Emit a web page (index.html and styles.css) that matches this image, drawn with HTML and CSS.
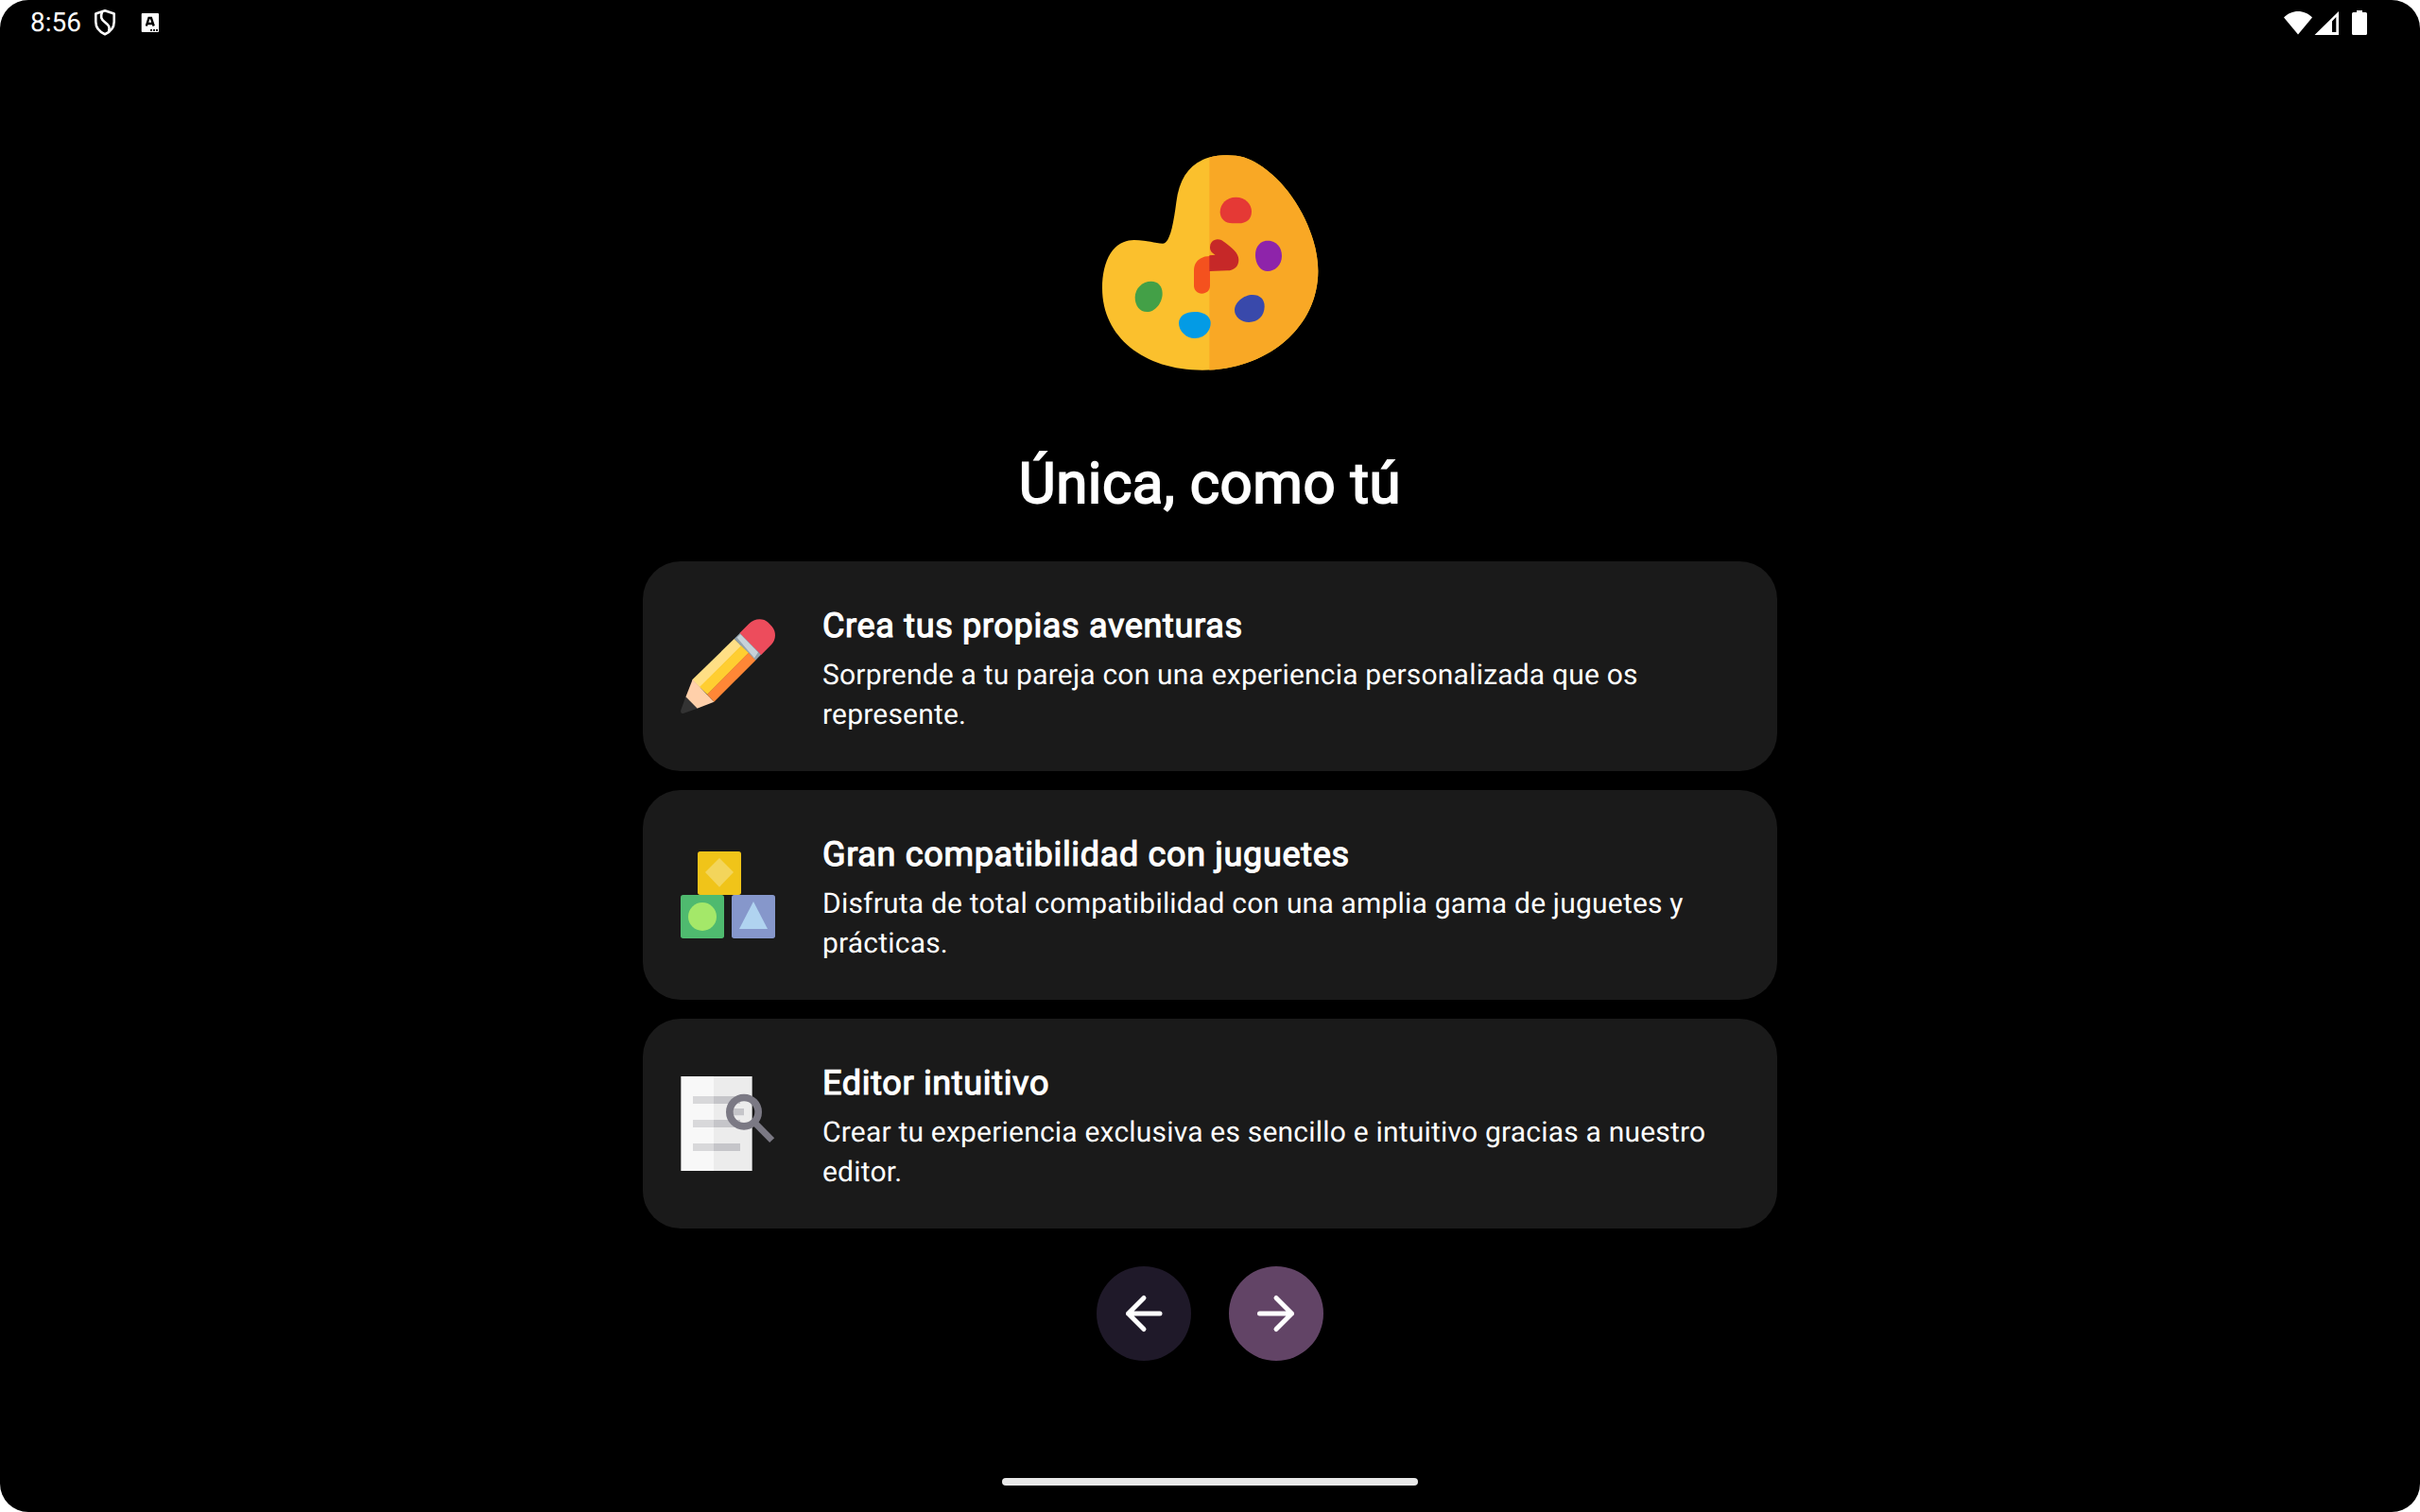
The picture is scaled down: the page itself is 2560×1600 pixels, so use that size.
FILE: index.html
```
<!DOCTYPE html>
<html lang="es">
<head>
<meta charset="utf-8">
<title>Única, como tú</title>
<link rel="stylesheet" href="styles.css">
</head>
<body>
<div class="screen">
  <header class="status">
    <div class="status-left">
      <span class="clock">8:56</span>
      <svg class="shield" width="24" height="30" viewBox="0 0 24 30" fill="none" stroke="#fff" stroke-width="2.6" stroke-linejoin="round"><path d="M12 2.2 21.7 5.6V14C21.7 20.500 17 25 12 27.200 7 25 2.300 20.500 2.300 14V5.600Z"/><path d="M9 3.500C7 9 8 11.500 12 14.500 16.500 18 17.500 20 16 24"/></svg>
      <svg class="lang" width="20" height="22" viewBox="0 0 20 22"><rect x="0.700" y="1" width="18.300" height="20" rx="1" fill="#fff"/><path d="M5.800 14.500 8.500 6h2.400l2.800 8.500M6.700 12h6" fill="none" stroke="#000" stroke-width="2.400"/><path d="M10 18h2v2h-2zM13 18h2v2h-2zM16 18h2v2h-2z" fill="#000"/></svg>
    </div>
    <svg class="signals" width="90" height="28" viewBox="0 0 90 28" fill="#fff"><path d="M0 8.500C8-.200 22-.200 30 8.500L15 26.500Z"/><path fill-rule="evenodd" d="M58 2V27H32.500ZM55.300 8 51 12.500V24H55.300Z"/><path d="M77 1h6v2h3.500q1.500 0 1.500 1.500v21q0 1.500-1.500 1.500h-13q-1.500 0-1.500-1.500v-21q0-1.500 1.500-1.500H77Z"/></svg>
  </header>
  <main class="content">
    <svg class="palette" width="260" height="250" viewBox="0 0 780 750">
      <defs><clipPath id="right-half"><rect x="388" width="392" height="750"/></clipPath></defs>
      <path fill="#fbc02d" d="M444 43C485 43 515 53 541 70C650 135 733 290 733 410C733 590 570 725 366 725C180 725 48 620 48 465C48 375 84 312 149 312C192 312 215 323 240 323C261 323 273 270 283 192C296 90 350 43 444 43Z"/>
      <path clip-path="url(#right-half)" fill="#f9a825" d="M444 43C485 43 515 53 541 70C650 135 733 290 733 410C733 590 570 725 366 725C180 725 48 620 48 465C48 375 84 312 149 312C192 312 215 323 240 323C261 323 273 270 283 192C296 90 350 43 444 43Z"/>
      <path fill="#e53935" d="M472 176C503 176 522 199 522 221C522 246 505 259 481 259H461C438 259 422 245 422 223C422 197 443 176 472 176Z"/>
      <path fill="#8e24aa" d="M573 314C601 314 618 335 618 363C618 391 596 411 573 411C550 411 534 388 534 359C534 332 550 314 573 314Z"/>
      <path fill="#3949ab" d="M525 486C549 486 563 500 563 523C563 553 542 573 514 573C488 573 468 556 468 534C468 510 497 486 525 486Z"/>
      <path fill="#039be5" d="M342 540C372 540 392 554 392 576C392 602 370 624 342 624C314 624 291 601 291 576C291 553 313 540 342 540Z"/>
      <path fill="#43a047" d="M203 443C226 443 239 459 239 482C239 511 216 540 190 540C167 540 152 520 152 494C152 465 176 443 203 443Z"/>
      <path fill="#f4511e" d="M390 363V457C390 473 378 482 364 482C350 482 339 472 339 457V408C339 381 359 363 390 363Z"/>
      <path fill="#c62828" d="M388 361 407 359C398 354 390 347 390 335C390 317 403 310 414 310C423 310 430 314 435 318C459 336 481 353 481 375C481 396 466 409 445 409L388 411Z"/>
    </svg>
    <h1 class="headline">Única, como tú</h1>
    <section class="cards">
      <article class="card">
        <svg class="icon" viewBox="0 0 300 300"><path fill="#ed4c5c" d="M187 45 217 15C234-3 262-4 278 11L290 24C304 40 303 65 289 80L255 115Z"/><path fill="#94a3ad" d="M170 63 188 45 255 113 237 132Z"/><path fill="#c7d2d8" d="M179 59 190 49 246 106 234 124Z"/><path fill="#ffdf85" d="M170 63 193 86 61 218 37 193Z"/><path fill="#ffce31" d="M192 85 216 108 85 240 60 216Z"/><path fill="#ff8736" d="M215 107 238 131 106 263 84 240Z"/><path fill="#ffd0aa" d="M38 192 106 263 52 284 16 248Z"/><path fill="#333" d="M16 247 53 284 8 300Q-2 301 1 289Z"/></svg>
        <div class="copy"><h2>Crea tus propias aventuras</h2><p>Sorprende a tu pareja con una experiencia personalizada que os represente.</p></div>
      </article>
      <article class="card">
        <svg class="icon" viewBox="0 0 300 300"><rect x="54" y="12" width="138" height="138" rx="8" fill="#f0c419"/><path fill="#f3d55b" d="M123 33 168 78 123 125 78 78Z"/><rect y="150" width="138" height="138" rx="8" fill="#4fba6f"/><circle cx="69" cy="219" r="45" fill="#a4e869"/><rect x="162" y="150" width="138" height="138" rx="8" fill="#8697cb"/><path fill="#b0d3f0" d="M231 171 276 258H186Z"/></svg>
        <div class="copy"><h2>Gran compatibilidad con juguetes</h2><p>Disfruta de total compatibilidad con una amplia gama de juguetes y prácticas.</p></div>
      </article>
      <article class="card">
        <svg class="icon" viewBox="0 0 300 300"><path fill="#f8f8f8" d="M1 0H120V300H1Z"/><path fill="#ececec" d="M105 0H227V300H105Z"/><path fill="#d8d8da" d="M39 63H105V87H39ZM39 138H105V162H39ZM39 213H105V237H39Z"/><path fill="#c5c5c9" d="M105 63H189V87H105ZM105 138H189V162H105ZM105 213H189V237H105ZM160 102H201V124H160Z"/><circle cx="201" cy="113" r="45.500" fill="none" stroke="#7b7984" stroke-width="23"/><path stroke="#7b7984" stroke-width="21" d="M236 148 290 203"/></svg>
        <div class="copy"><h2>Editor intuitivo</h2><p>Crear tu experiencia exclusiva es sencillo e intuitivo gracias a nuestro editor.</p></div>
      </article>
    </section>
    <nav class="nav">
      <button class="round back" aria-label="Atrás"><svg width="50" height="50" viewBox="0 0 50 50"><path d="M42 25H8.500M25 8.500 8.500 25 25 41.500"/></svg></button>
      <button class="round next" aria-label="Siguiente"><svg width="50" height="50" viewBox="0 0 50 50"><path d="M7.500 25H41.500M25 8.500 41.500 25 25 41.500"/></svg></button>
    </nav>
  </main>
  <div class="home-bar"></div>
</div>
</body>
</html>
```
FILE: styles.css
```
* { box-sizing: border-box; }
body { margin: 0; background: #fff; font-family: Roboto, sans-serif; color: #fff; text-rendering: geometricPrecision; }
.screen { width: 2560px; height: 1600px; background: #000; border-radius: 30px; overflow: hidden; display: flex; flex-direction: column; align-items: center; }
.status { width: 100%; height: 48px; display: flex; justify-content: space-between; align-items: flex-start; padding: 0 54px 0 32px; }
.status-left { display: flex; align-items: flex-start; }
.clock { font-size: 28px; line-height: 48px; width: 67px; }
.shield { margin-top: 9px; }
.lang { margin: 13px 0 0 26px; }
.signals { margin-top: 10px; }
.content { display: flex; flex-direction: column; align-items: center; padding-top: 102px; }
.palette { display: block; }
.headline { margin: 76px 0 0; font-size: 60px; line-height: 72px; font-weight: 400; letter-spacing: .5px; -webkit-text-stroke: 1.8px #fff; }
.cards { width: 1200px; display: flex; flex-direction: column; gap: 20px; margin-top: 46px; }
.card { height: 222px; padding: 40px; border-radius: 40px; background: #1a1a1a; display: flex; align-items: center; gap: 50px; }
.icon { width: 100px; height: 100px; flex: none; overflow: visible; }
.copy { flex: 1; padding-top: 2px; }
.copy h2 { margin: 0; font-size: 36px; line-height: 54px; font-weight: 400; letter-spacing: .66px; -webkit-text-stroke: 1.2px #fff; }
.copy p { margin: 5px 0 0; font-size: 30px; line-height: 42px; letter-spacing: .2px; }
.nav { display: flex; gap: 40px; margin-top: 40px; }
.round { width: 100px; height: 100px; border: 0; border-radius: 50%; padding: 0; display: flex; align-items: center; justify-content: center; }
.round path { fill: none; stroke: #fff; stroke-width: 5; stroke-linecap: round; stroke-linejoin: round; }
.back { background: #1f1929; }
.next { background: #624466; }
.home-bar { width: 440px; height: 8px; margin-top: 124px; border-radius: 4px; background: #e8e8e8; }
```
